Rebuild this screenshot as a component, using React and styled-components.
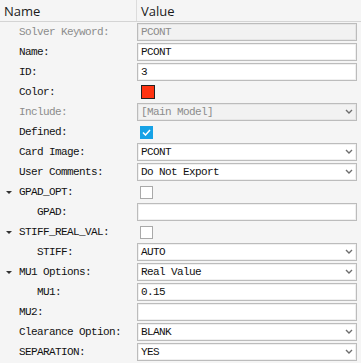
import React from 'react'
import styled, { createGlobalStyle } from 'styled-components'

const GlobalStyle = createGlobalStyle`
  html, body {
    margin: 0;
    padding: 0;
    background: #f5f5f5;
  }
`

const mono = `'Liberation Mono', 'DejaVu Sans Mono', monospace`

const Panel = styled.div`
  width: 361px;
  height: 363px;
  background: #f5f5f5;
  overflow: hidden;
`

const Header = styled.div`
  display: grid;
  grid-template-columns: 137px 1fr;
  height: 21px;
  border-bottom: 1px solid #d4d4d4;
  font-family: 'Open Sans', 'Liberation Sans', sans-serif;
  font-size: 13px;
  color: #1a1a1a;
`

const HeadCell = styled.div`
  display: flex;
  align-items: center;
  padding-left: ${p => p.$pad}px;
  border-right: ${p => (p.$divider ? '1px solid #dcdcdc' : 'none')};
`

const Row = styled.div`
  display: grid;
  grid-template-columns: 137px 220px;
  height: 20px;
  align-items: center;
`

const Label = styled.div`
  display: flex;
  align-items: center;
  height: 20px;
  padding-left: ${p => p.$indent}px;
  position: relative;
  font-family: ${mono};
  font-size: 11px;
  letter-spacing: -0.6px;
  color: ${p => (p.$disabled ? '#8c8c8c' : '#111')};
  white-space: nowrap;
`

const Caret = styled.span`
  position: absolute;
  left: 6px;
  top: 9px;
  width: 0;
  height: 0;
  border-left: 3px solid transparent;
  border-right: 3px solid transparent;
  border-top: 3px solid #333;
`

const Field = styled.div`
  box-sizing: border-box;
  height: 18px;
  display: flex;
  align-items: center;
  padding: 0 3px;
  background: ${p => (p.$disabled ? '#f2f2f2' : '#fff')};
  border: 1px solid #bcbcbc;
  box-shadow: inset 0 0 0 1px ${p => (p.$disabled ? '#e6e6e6' : '#f0f0f0')};
  font-family: ${mono};
  font-size: 11px;
  letter-spacing: -0.6px;
  color: ${p => (p.$disabled ? '#8c8c8c' : '#111')};
  white-space: nowrap;
`

const SelectText = styled.span`
  flex: 1;
`

const Arrow = () => (
  <svg width="8" height="6" viewBox="0 0 8 6">
    <path d="M1 1 L4 4 L7 1" fill="none" stroke="#6e6e6e" strokeWidth="1.4" />
  </svg>
)

const Swatch = styled.div`
  box-sizing: border-box;
  width: 14px;
  height: 14px;
  margin-left: 4px;
  background: #ff3311;
  border: 1px solid #222;
`

const Check = styled.div`
  box-sizing: border-box;
  width: 13px;
  height: 13px;
  margin-left: 3px;
  display: flex;
  align-items: center;
  justify-content: center;
  background: ${p => (p.$on ? '#16a2e6' : '#fff')};
  border: 1px solid ${p => (p.$on ? '#16a2e6' : '#a9a9a9')};
`

const rows = [
  { label: 'Solver Keyword:', type: 'text', value: 'PCONT', disabled: true },
  { label: 'Name:', type: 'text', value: 'PCONT' },
  { label: 'ID:', type: 'text', value: '3' },
  { label: 'Color:', type: 'color' },
  { label: 'Include:', type: 'select', value: '[Main Model]', disabled: true },
  { label: 'Defined:', type: 'check', on: true },
  { label: 'Card Image:', type: 'select', value: 'PCONT' },
  { label: 'User Comments:', type: 'select', value: 'Do Not Export' },
  { label: 'GPAD_OPT:', type: 'check', caret: true },
  { label: 'GPAD:', type: 'text', value: '', child: true },
  { label: 'STIFF_REAL_VAL:', type: 'check', caret: true },
  { label: 'STIFF:', type: 'select', value: 'AUTO', child: true },
  { label: 'MU1 Options:', type: 'select', value: 'Real Value', caret: true },
  { label: 'MU1:', type: 'text', value: '0.15', child: true },
  { label: 'MU2:', type: 'text', value: '' },
  { label: 'Clearance Option:', type: 'select', value: 'BLANK' },
  { label: 'SEPARATION:', type: 'select', value: 'YES' },
]

const renderValue = r => {
  if (r.type === 'color') return <Swatch />
  if (r.type === 'check')
    return (
      <Check $on={r.on}>
        {r.on && (
          <svg width="9" height="7" viewBox="0 0 9 7">
            <path d="M1 3.5 L3.5 6 L8 1" fill="none" stroke="#fff" strokeWidth="1.5" />
          </svg>
        )}
      </Check>
    )
  if (r.type === 'select')
    return (
      <Field $disabled={r.disabled}>
        <SelectText>{r.value}</SelectText>
        <Arrow />
      </Field>
    )
  return <Field $disabled={r.disabled}>{r.value}</Field>
}

const App = () => (
  <>
    <GlobalStyle />
    <Panel>
      <Header>
        <HeadCell $pad={4} $divider>Name</HeadCell>
        <HeadCell $pad={4}>Value</HeadCell>
      </Header>
      {rows.map(r => (
        <Row key={r.label}>
          <Label $indent={r.child ? 37 : 19} $disabled={r.disabled}>
            {r.caret && <Caret />}
            {r.label}
          </Label>
          {renderValue(r)}
        </Row>
      ))}
    </Panel>
  </>
)

export default App
